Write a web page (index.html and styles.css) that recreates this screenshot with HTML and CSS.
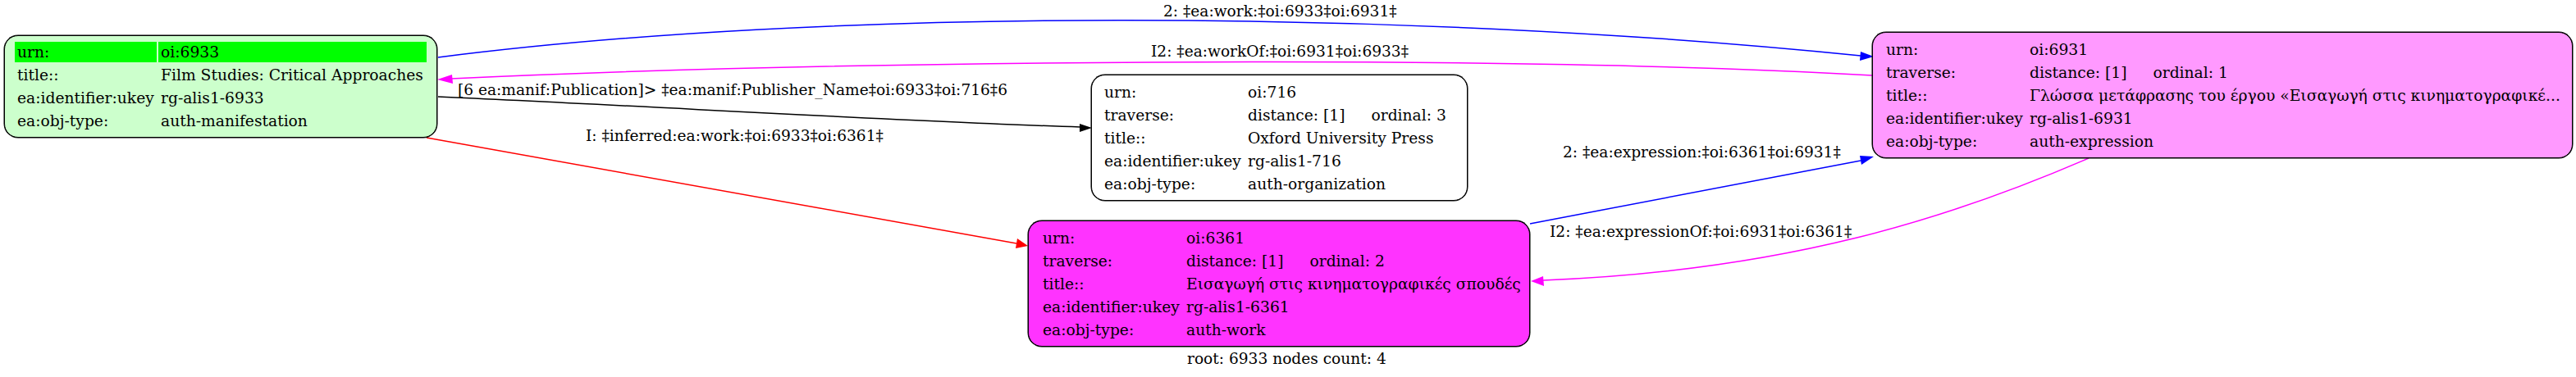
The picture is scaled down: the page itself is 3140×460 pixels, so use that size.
FILE: index.html
```html
<!DOCTYPE html>
<html lang="en">
<head>
<meta charset="utf-8">
<title>root: 6933 nodes count: 4</title>
<link rel="stylesheet" href="styles.css">
</head>
<body>
<main class="graph">
  <svg class="edges" width="3140" height="460" viewBox="0 0 3140 460" aria-hidden="true">
    <path class="edge blue" d="M534,70 C1000,10 1700,10 2268,68"/>
    <polygon class="head-blue" points="2284,69 2268,63 2267,74"/>
    <path class="edge magenta" d="M2282,92 C1800,65 1000,75 550,96"/>
    <polygon class="head-magenta" points="533,97 551,91 552,102"/>
    <path class="edge black" d="M534,118 C800,130 1100,148 1317,155"/>
    <polygon class="head-black" points="1331,156 1316,151 1316,161"/>
    <path class="edge red" d="M520,168 L1239,297"/>
    <polygon class="head-red" points="1253,300 1240,291 1238,303"/>
    <path class="edge blue" d="M1865,273 L2268,196"/>
    <polygon class="head-blue" points="2284,191 2267,190 2269,201"/>
    <path class="edge magenta" d="M2546,193 C2380,265 2180,330 1881,342"/>
    <polygon class="head-magenta" points="1866,343 1881,337 1882,349"/>
  </svg>

  <span class="label l-work">2: ‡ea:work:‡oi:6933‡oi:6931‡</span>
  <span class="label l-workof">I2: ‡ea:workOf:‡oi:6931‡oi:6933‡</span>
  <span class="label l-pub">[6 ea:manif:Publication]&gt; ‡ea:manif:Publisher_Name‡oi:6933‡oi:716‡6</span>
  <span class="label l-inf">I: ‡inferred:ea:work:‡oi:6933‡oi:6361‡</span>
  <span class="label l-expr">2: ‡ea:expression:‡oi:6361‡oi:6931‡</span>
  <span class="label l-exprof">I2: ‡ea:expressionOf:‡oi:6931‡oi:6361‡</span>
  <span class="label l-root">root: 6933 nodes count: 4</span>

  <section class="node n-6933">
    <div class="cell key hl">urn:</div><div class="cell hl">oi:6933</div>
    <div class="cell key">title::</div><div class="cell">Film Studies: Critical Approaches</div>
    <div class="cell key">ea:identifier:ukey</div><div class="cell">rg-alis1-6933</div>
    <div class="cell key">ea:obj-type:</div><div class="cell">auth-manifestation</div>
  </section>

  <section class="node n-716">
    <div class="cell key">urn:</div><div class="cell">oi:716</div>
    <div class="cell key">traverse:</div><div class="cell trav"><span>distance: [1]</span><span>ordinal: 3</span></div>
    <div class="cell key">title::</div><div class="cell">Oxford University Press</div>
    <div class="cell key">ea:identifier:ukey</div><div class="cell">rg-alis1-716</div>
    <div class="cell key">ea:obj-type:</div><div class="cell">auth-organization</div>
  </section>

  <section class="node n-6361">
    <div class="cell key">urn:</div><div class="cell">oi:6361</div>
    <div class="cell key">traverse:</div><div class="cell trav"><span>distance: [1]</span><span>ordinal: 2</span></div>
    <div class="cell key">title::</div><div class="cell">Εισαγωγή στις κινηματογραφικές σπουδές</div>
    <div class="cell key">ea:identifier:ukey</div><div class="cell">rg-alis1-6361</div>
    <div class="cell key">ea:obj-type:</div><div class="cell">auth-work</div>
  </section>

  <section class="node n-6931">
    <div class="cell key">urn:</div><div class="cell">oi:6931</div>
    <div class="cell key">traverse:</div><div class="cell trav"><span>distance: [1]</span><span>ordinal: 1</span></div>
    <div class="cell key">title::</div><div class="cell">Γλώσσα μετάφρασης του έργου «Εισαγωγή στις κινηματογραφικέ...</div>
    <div class="cell key">ea:identifier:ukey</div><div class="cell">rg-alis1-6931</div>
    <div class="cell key">ea:obj-type:</div><div class="cell">auth-expression</div>
  </section>
</main>
</body>
</html>
```
FILE: styles.css
```css
html, body { margin: 0; padding: 0; background: #fff; }
body { font-family: "DejaVu Serif", serif; font-size: 18.7px; color: #000; }
.graph { position: relative; width: 3140px; height: 460px; overflow: hidden; }
.edges { position: absolute; left: 0; top: 0; }
.edge { fill: none; stroke-width: 1.5; }
.blue { stroke: #0000ff; }
.magenta { stroke: #ff00ff; }
.black { stroke: #000; }
.red { stroke: #ff0000; }
.head-blue { fill: #0000ff; }
.head-magenta { fill: #ff00ff; }
.head-black { fill: #000; }
.head-red { fill: #ff0000; }

.label { position: absolute; white-space: nowrap; line-height: 20px; font-size: 18.6px; }
.l-work { left: 1418px; top: 4px; }
.l-workof { left: 1403px; top: 53px; }
.l-pub { left: 558px; top: 100px; }
.l-inf { left: 714px; top: 156px; }
.l-expr { left: 1905px; top: 176px; }
.l-exprof { left: 1889px; top: 273px; }
.l-root { left: 1447px; top: 428px; }

.node {
  position: absolute; box-sizing: border-box;
  border: 1px solid #000; border-radius: 17px;
  box-shadow: 0 0 0 0.5px #000;
  display: grid; align-content: center; column-gap: 2px; row-gap: 3px;
}
.cell { height: 25px; line-height: 25px; padding: 0 3px; white-space: nowrap; }
.hl { background: #00ff00; }
.trav { display: flex; gap: 32px; }

.n-6933 { left: 5px; top: 43px; width: 528px; height: 125px; background: #ccffcc; grid-template-columns: 173px 327px; justify-content: center; }
.n-716 { left: 1330px; top: 91px; width: 459px; height: 154px; background: #fff; grid-template-columns: 173px 1fr; padding: 0 12px; }
.n-6361 { left: 1253px; top: 269px; width: 612px; height: 154px; background: #ff33ff; grid-template-columns: 173px 1fr; padding: 0 14px; }
.n-6931 { left: 2282px; top: 39px; width: 854px; height: 154px; background: #ff99ff; grid-template-columns: 173px 1fr; padding: 0 13px; }
```
